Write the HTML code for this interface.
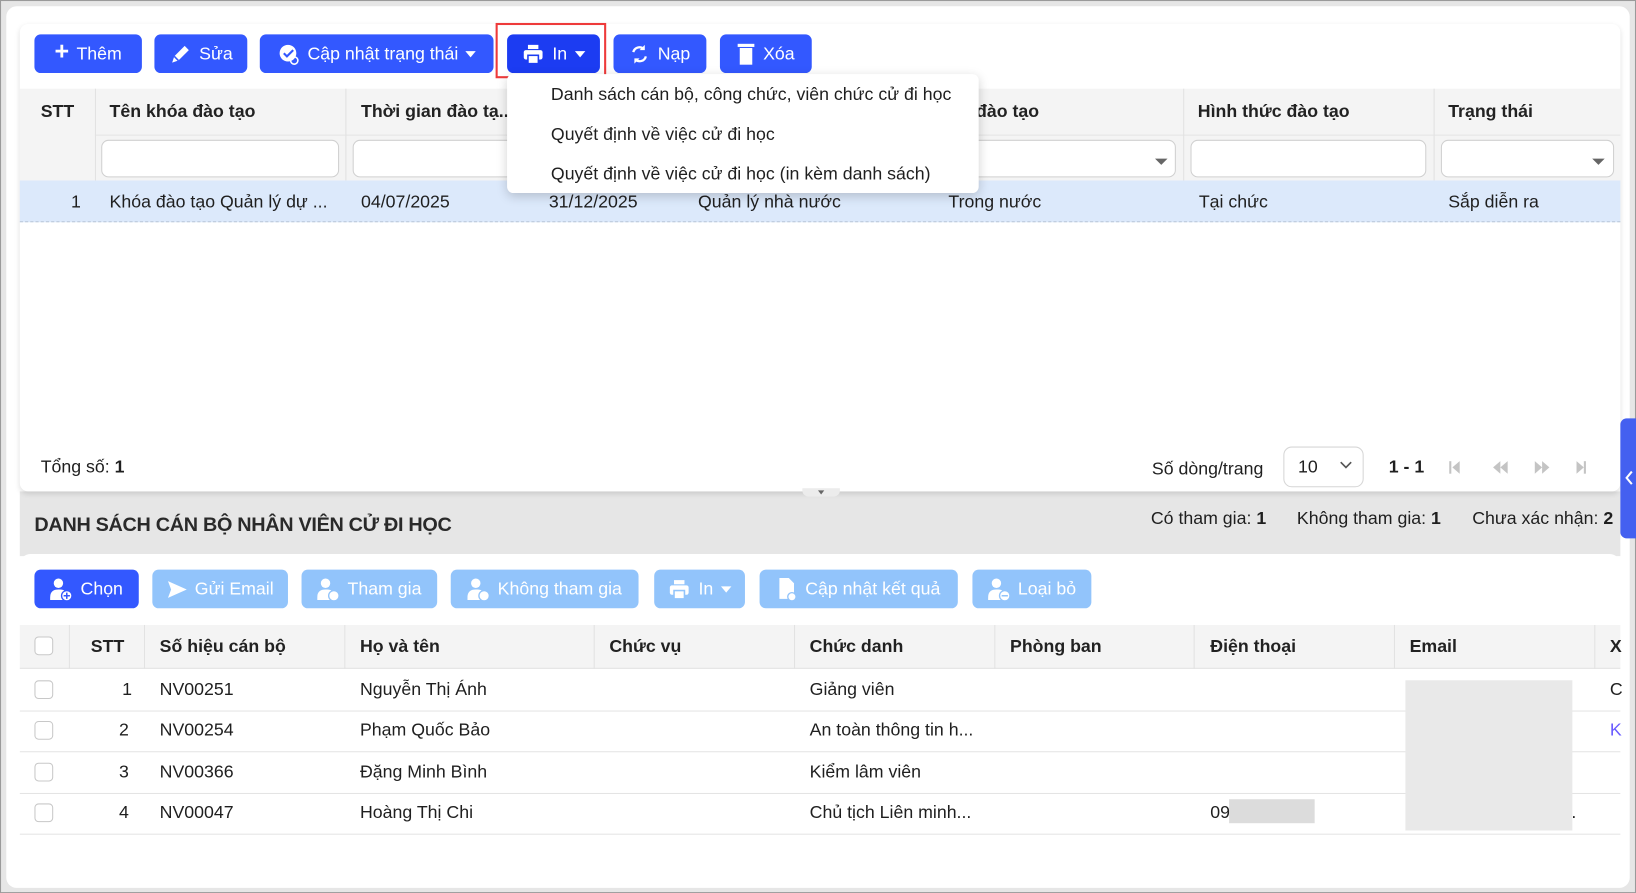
<!DOCTYPE html>
<html><head><meta charset="utf-8">
<style>
*{box-sizing:border-box;margin:0;padding:0}
html,body{width:1636px;height:893px;overflow:hidden;background:#e6e6e6}
body{font-family:"Liberation Sans","DejaVu Sans",sans-serif;color:#1f1f1f}
#w{position:absolute;left:0;top:0;width:1568px;height:856px;transform:scale(1.04337);transform-origin:0 0;border:1px solid #9a9a9a;background:#e6e6e6}
.a{position:absolute}
.card{background:#fff;border-radius:10px}
.btn{position:absolute;height:37px;border-radius:6px;background:#3358ff;color:#fff;font-size:17px;display:flex;align-items:center;justify-content:center;gap:7px;white-space:nowrap}
.lb{background:#92c4fb}
.t{position:absolute;font-size:17px;white-space:nowrap}
.h{font-weight:bold;color:#222}
.cb{position:absolute;width:18px;height:18px;border:1px solid #c8c8c8;border-radius:4px;background:#fff}
.vl{position:absolute;width:1px;background:#e2e2e2}
.hl{position:absolute;height:1px;background:#e4e4e4}
.inp{position:absolute;height:36px;border:1px solid #d0d0d0;border-radius:7px;background:#fff}
.caret{display:inline-block;width:0;height:0;border-left:5px solid transparent;border-right:5px solid transparent;border-top:6px solid #fff}
</style></head><body>
<div id="w">
<div class="a card" style="left:5px;top:5px;width:1556px;height:845px"></div>
<div class="a" style="left:18px;top:470px;width:1534px;height:62px;background:#e6e6e6"></div>
<!-- top card -->
<div class="a" style="left:18px;top:22px;width:1534px;height:448px;background:#fff;border-radius:8px;box-shadow:0 2px 5px rgba(0,0,0,.12)"></div>
<div class="btn" style="left:32px;top:32px;width:103px"><span style="font-size:24px;font-weight:bold;margin-top:-3px">+</span>Thêm</div>
<div class="btn" style="left:147px;top:32px;width:89px"><svg width="22" height="22" viewBox="0 0 22 22"><path d="M3 19l2-6L15 3l4 4L9 17z" fill="#fff"/><path d="M5 13l4 4" stroke="#3358ff" stroke-width="1.5"/></svg>Sửa</div>
<div class="btn" style="left:248px;top:32px;width:224px"><svg width="22" height="22" viewBox="0 0 22 22"><circle cx="10" cy="10" r="8" fill="#fff"/><path d="M6 10l3 3 6-6" stroke="#3358ff" stroke-width="2" fill="none"/><circle cx="16" cy="17" r="3.5" fill="none" stroke="#fff" stroke-width="1.5"/></svg>Cập nhật trạng thái <span class="caret"></span></div>
<div class="a" style="left:474px;top:21px;width:106px;height:53px;border:2px solid #ee3a3a"></div>
<div class="btn" style="left:485px;top:32px;width:89px;background:#1c3cf2"><svg width="22" height="22" viewBox="0 0 22 22"><rect x="6" y="2" width="10" height="4" fill="#fff"/><rect x="2" y="7" width="18" height="9" rx="2" fill="#fff"/><rect x="6" y="12" width="10" height="8" fill="#fff" stroke="#1c3cf2" stroke-width="1.5"/></svg>In <span class="caret"></span></div>
<div class="btn" style="left:587px;top:32px;width:89px"><svg width="20" height="20" viewBox="0 0 20 20"><path d="M4 8a6 6 0 0 1 10-3M16 12a6 6 0 0 1-10 3" stroke="#fff" stroke-width="2.2" fill="none"/><path d="M15 1v5h-5M5 19v-5h5" fill="#fff"/></svg>Nạp</div>
<div class="btn" style="left:689px;top:32px;width:88px"><svg width="18" height="22" viewBox="0 0 18 22"><rect x="1" y="1" width="16" height="3" fill="#fff"/><rect x="3" y="5" width="12" height="16" fill="#fff"/></svg>Xóa</div>

<!-- upper table -->
<div class="a" style="left:18px;top:84px;width:1534px;height:88px;background:#f4f4f4"></div>
<div class="hl" style="left:90px;top:128px;width:1462px"></div>
<div class="vl" style="left:90px;top:84px;height:88px"></div>
<div class="vl" style="left:330px;top:84px;height:88px"></div>
<div class="vl" style="left:1133px;top:84px;height:88px"></div>
<div class="vl" style="left:1373px;top:84px;height:88px"></div>
<div class="t h" style="left:38px;top:96px">STT</div>
<div class="t h" style="left:104px;top:96px">Tên khóa đào tạo</div>
<div class="t h" style="left:345px;top:96px">Thời gian đào tạ...</div>
<div class="t h" style="left:925px;top:96px">i đào tạo</div>
<div class="t h" style="left:1147px;top:96px">Hình thức đào tạo</div>
<div class="t h" style="left:1387px;top:96px">Trạng thái</div>
<div class="inp" style="left:96px;top:133px;width:228px"></div>
<div class="inp" style="left:337px;top:133px;width:160px"></div>
<div class="inp" style="left:930px;top:133px;width:196px"></div>
<div class="a" style="left:1106px;top:151px;border-left:6px solid transparent;border-right:6px solid transparent;border-top:6px solid #666"></div>
<div class="inp" style="left:1140px;top:133px;width:226px"></div>
<div class="inp" style="left:1380px;top:133px;width:166px"></div>
<div class="a" style="left:1525px;top:151px;border-left:6px solid transparent;border-right:6px solid transparent;border-top:6px solid #666"></div>
<div class="a" style="left:18px;top:172px;width:1534px;height:40px;background:#dce9fb;border-bottom:1px dashed #b8c6d8"></div>
<div class="t" style="left:67px;top:183px">1</div>
<div class="t" style="left:104px;top:183px">Khóa đào tạo Quản lý dự ...</div>
<div class="t" style="left:345px;top:183px">04/07/2025</div>
<div class="t" style="left:525px;top:183px">31/12/2025</div>
<div class="t" style="left:668px;top:183px">Quản lý nhà nước</div>
<div class="t" style="left:908px;top:183px">Trong nước</div>
<div class="t" style="left:1148px;top:183px">Tại chức</div>
<div class="t" style="left:1387px;top:183px">Sắp diễn ra</div>

<!-- dropdown -->
<div class="a" style="left:485px;top:70px;width:452px;height:114px;background:#fff;border-radius:6px;box-shadow:0 3px 10px rgba(0,0,0,.18)"></div>
<div class="t" style="left:527px;top:80px">Danh sách cán bộ, công chức, viên chức cử đi học</div>
<div class="t" style="left:527px;top:118px">Quyết định về việc cử đi học</div>
<div class="t" style="left:527px;top:156px">Quyết định về việc cử đi học (in kèm danh sách)</div>

<!-- footer -->
<div class="t" style="left:38px;top:437px">Tổng số: <b>1</b></div>
<div class="t" style="left:1103px;top:439px">Số dòng/trang</div>
<div class="a" style="left:1229px;top:427px;width:77px;height:39px;border:1px solid #d6d6d6;border-radius:8px"></div>
<div class="t" style="left:1243px;top:437px">10</div>
<svg class="a" style="left:1283px;top:441px" width="12" height="8" viewBox="0 0 12 8"><path d="M1 1l5 5 5-5" stroke="#555" stroke-width="1.6" fill="none"/></svg>
<div class="t" style="left:1330px;top:437px;font-weight:bold">1 - 1</div>
<svg class="a" style="left:1387px;top:440px" width="140" height="14" viewBox="0 0 140 14"><g fill="#c4c4c4"><rect x="1" y="1" width="2" height="12"/><path d="M11 1v12L4 7z"/><path d="M50 1v12L43 7zM57 1v12L50 7z"/><path d="M83 1v12l7-6zM90 1v12l7-6z"/><path d="M123 1v12l7-6z"/><rect x="130" y="1" width="2" height="12"/></g></svg>
<div class="a" style="left:768px;top:467px;width:36px;height:8px;background:#ececec;border-radius:0 0 6px 6px"></div>
<div class="a" style="left:783px;top:469px;border-left:3px solid transparent;border-right:3px solid transparent;border-top:4px solid #666"></div>
<div class="a" style="left:1552px;top:400px;width:16px;height:115px;background:#4460f0;border-radius:6px 0 0 6px"></div>
<svg class="a" style="left:1556px;top:450px" width="9" height="14" viewBox="0 0 9 14"><path d="M7 1L2 7l5 6" stroke="#fff" stroke-width="2" fill="none"/></svg>

<!-- band -->
<div class="t" style="left:32px;top:492px;font-size:19px;font-weight:bold;color:#2a2a2a;letter-spacing:-0.3px">DANH SÁCH CÁN BỘ NHÂN VIÊN CỬ ĐI HỌC</div>
<div class="t" style="left:1102px;top:486px">Có tham gia: <b>1</b></div>
<div class="t" style="left:1242px;top:486px">Không tham gia: <b>1</b></div>
<div class="t" style="left:1410px;top:486px">Chưa xác nhận: <b>2</b></div>

<!-- lower card -->
<div class="a" style="left:18px;top:530px;width:1534px;height:318px;background:#fff;border-radius:10px 10px 0 0"></div>
<div class="btn" style="left:32px;top:545px;width:100px"><svg width="22" height="24" viewBox="0 0 22 24"><circle cx="8" cy="6" r="4.5" fill="#fff"/><path d="M0 20c0-6 3-8 8-8s6 1 7 2v8H0z" fill="#fff"/><circle cx="16" cy="18" r="5" fill="#fff" stroke="#3358ff" stroke-width="1.3"/><path d="M16 15v6M13 18h6" stroke="#3358ff" stroke-width="1.5"/></svg>Chọn</div>
<div class="btn lb" style="left:145px;top:545px;width:130px"><svg width="20" height="18" viewBox="0 0 20 18"><path d="M1 1l18 8-18 8 3-8z" fill="#fff"/></svg>Gửi Email</div>
<div class="btn lb" style="left:288px;top:545px;width:130px"><svg width="22" height="24" viewBox="0 0 22 24"><circle cx="8" cy="6" r="4.5" fill="#fff"/><path d="M0 20c0-6 3-8 8-8s6 1 7 2v8H0z" fill="#fff"/><circle cx="16" cy="18" r="5" fill="#fff" stroke="#92c4fb" stroke-width="1.3"/></svg>Tham gia</div>
<div class="btn lb" style="left:431px;top:545px;width:180px"><svg width="22" height="24" viewBox="0 0 22 24"><circle cx="8" cy="6" r="4.5" fill="#fff"/><path d="M0 20c0-6 3-8 8-8s6 1 7 2v8H0z" fill="#fff"/><circle cx="16" cy="18" r="5" fill="#fff" stroke="#92c4fb" stroke-width="1.3"/></svg>Không tham gia</div>
<div class="btn lb" style="left:626px;top:545px;width:87px"><svg width="22" height="22" viewBox="0 0 22 22"><rect x="6" y="2" width="10" height="4" fill="#fff"/><rect x="2" y="7" width="18" height="9" rx="2" fill="#fff"/><rect x="6" y="12" width="10" height="8" fill="#fff" stroke="#92c4fb" stroke-width="1.5"/></svg>In <span class="caret"></span></div>
<div class="btn lb" style="left:727px;top:545px;width:190px"><svg width="20" height="24" viewBox="0 0 20 24"><path d="M2 1h9l5 5v15H2z" fill="#fff"/><circle cx="14" cy="19" r="4" fill="#fff" stroke="#92c4fb" stroke-width="1.3"/></svg>Cập nhật kết quả</div>
<div class="btn lb" style="left:931px;top:545px;width:114px"><svg width="22" height="24" viewBox="0 0 22 24"><circle cx="8" cy="6" r="4.5" fill="#fff"/><path d="M0 20c0-6 3-8 8-8s6 1 7 2v8H0z" fill="#fff"/><circle cx="16" cy="18" r="5" fill="#fff" stroke="#92c4fb" stroke-width="1.3"/><path d="M13 18h6" stroke="#92c4fb" stroke-width="1.5"/></svg>Loại bỏ</div>

<div class="a" style="left:18px;top:598px;width:1534px;height:42px;background:#f4f4f4;border-bottom:1px solid #e2e2e2"></div>
<div class="vl" style="left:65px;top:598px;height:42px"></div>
<div class="vl" style="left:137px;top:598px;height:42px"></div>
<div class="vl" style="left:329px;top:598px;height:42px"></div>
<div class="vl" style="left:568px;top:598px;height:42px"></div>
<div class="vl" style="left:760px;top:598px;height:42px"></div>
<div class="vl" style="left:952px;top:598px;height:42px"></div>
<div class="vl" style="left:1143px;top:598px;height:42px"></div>
<div class="vl" style="left:1335px;top:598px;height:42px"></div>
<div class="vl" style="left:1527px;top:598px;height:42px"></div>
<div class="cb" style="left:32px;top:609px"></div>
<div class="t h" style="left:86px;top:609px">STT</div>
<div class="t h" style="left:152px;top:609px">Số hiệu cán bộ</div>
<div class="t h" style="left:344px;top:609px">Họ và tên</div>
<div class="t h" style="left:583px;top:609px">Chức vụ</div>
<div class="t h" style="left:775px;top:609px">Chức danh</div>
<div class="t h" style="left:967px;top:609px">Phòng ban</div>
<div class="t h" style="left:1159px;top:609px">Điện thoại</div>
<div class="t h" style="left:1350px;top:609px">Email</div>
<div class="t h" style="left:1542px;top:609px">X</div>

<div class="hl" style="left:18px;top:680px;width:1534px"></div>
<div class="hl" style="left:18px;top:719px;width:1534px"></div>
<div class="hl" style="left:18px;top:759px;width:1534px"></div>
<div class="hl" style="left:18px;top:798px;width:1534px"></div>

<div class="cb" style="left:32px;top:651px"></div>
<div class="t" style="left:116px;top:650px">1</div>
<div class="t" style="left:152px;top:650px">NV00251</div>
<div class="t" style="left:344px;top:650px">Nguyễn Thị Ánh</div>
<div class="t" style="left:775px;top:650px">Giảng viên</div>
<div class="t" style="left:1542px;top:650px">C</div>

<div class="cb" style="left:32px;top:690px"></div>
<div class="t" style="left:113px;top:689px">2</div>
<div class="t" style="left:152px;top:689px">NV00254</div>
<div class="t" style="left:344px;top:689px">Phạm Quốc Bảo</div>
<div class="t" style="left:775px;top:689px">An toàn thông tin h...</div>
<div class="t" style="left:1542px;top:689px;color:#6a5cff">K</div>

<div class="cb" style="left:32px;top:730px"></div>
<div class="t" style="left:113px;top:729px">3</div>
<div class="t" style="left:152px;top:729px">NV00366</div>
<div class="t" style="left:344px;top:729px">Đặng Minh Bình</div>
<div class="t" style="left:775px;top:729px">Kiểm lâm viên</div>

<div class="cb" style="left:32px;top:769px"></div>
<div class="t" style="left:113px;top:768px">4</div>
<div class="t" style="left:152px;top:768px">NV00047</div>
<div class="t" style="left:344px;top:768px">Hoàng Thị Chi</div>
<div class="t" style="left:775px;top:768px">Chủ tịch Liên minh...</div>
<div class="t" style="left:1159px;top:768px">09</div>
<div class="a" style="left:1177px;top:765px;width:82px;height:23px;background:#dcdcdc"></div>
<div class="t" style="left:1505px;top:768px">.</div>
<div class="a" style="left:1346px;top:651px;width:160px;height:144px;background:#e9e9e9"></div>
</div>
</body></html>
